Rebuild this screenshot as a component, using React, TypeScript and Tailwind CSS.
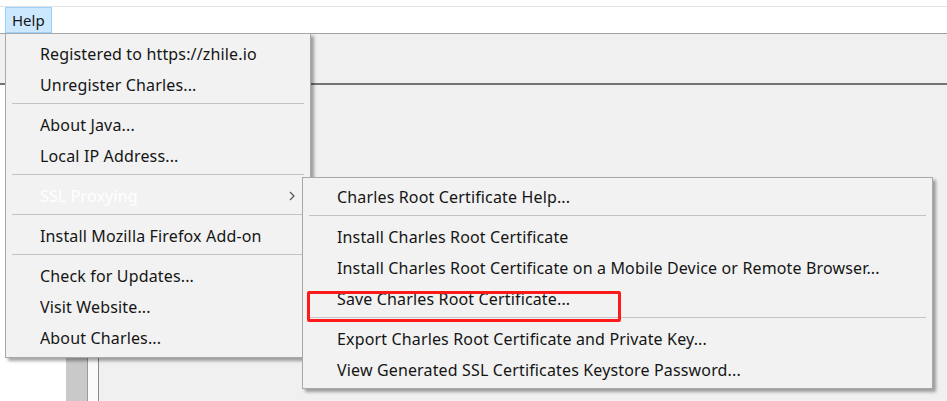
const main: (string | null)[] = [
  "Registered to https://zhile.io",
  "Unregister Charles...",
  null,
  "About Java...",
  "Local IP Address...",
  null,
  "SSL Proxying",
  null,
  "Install Mozilla Firefox Add-on",
  null,
  "Check for Updates...",
  "Visit Website...",
  "About Charles...",
];

const sub: (string | null)[] = [
  "Charles Root Certificate Help...",
  null,
  "Install Charles Root Certificate",
  "Install Charles Root Certificate on a Mobile Device or Remote Browser...",
  "Save Charles Root Certificate...",
  null,
  "Export Charles Root Certificate and Private Key...",
  "View Generated SSL Certificates Keystore Password...",
];

function Separator() {
  return (
    <div className="h-[9px] px-[6px] pt-[3px]">
      <div className="h-px bg-[#c4c4c4]" />
    </div>
  );
}

export default function App() {
  return (
    <div className="relative h-[401px] w-[947px] overflow-hidden bg-white font-['Noto_Sans','Liberation_Sans',sans-serif] text-[16px] tracking-[0.15px] text-[#151515]">
      {/* window chrome */}
      <div className="h-[7px] border-b border-[#e3e3e3] bg-white" />
      <div className="flex h-[26px] items-stretch bg-white">
        <div className="ml-[5px] flex items-center border border-[#99d1ff] bg-[#cce8ff] px-[6px] text-[15px] leading-none tracking-normal">
          Help
        </div>
      </div>
      <div className="h-[52px] border-t border-b-2 border-t-[#a0a0a0] border-b-[#747474] bg-[#f0f0f0]" />
      <div className="flex h-[316px]">
        <div className="w-[66px] bg-white" />
        <div className="w-[21px] bg-[#c9c9c9]" />
        <div className="w-[12px] border-l border-r border-l-[#9a9a9a] border-r-[#8a8a8a] bg-[#fafafa]" />
        <div className="flex-1 bg-[#f0f0f0]" />
      </div>

      {/* Help menu */}
      <div className="absolute left-[5px] top-[33px] w-[306px] border border-[#a8a8a8] bg-[#f2f2f2] pt-[4px] pb-[4px] shadow-[3px_3px_3px_rgba(0,0,0,0.35)]">
        {main.map((label, i) =>
          label === null ? (
            <Separator key={i} />
          ) : (
            <div key={i} className="relative flex h-[31px] items-center pl-[34px]">
              <span className={label === "SSL Proxying" ? "text-white" : ""}>{label}</span>
              {label === "SSL Proxying" && (
                <svg className="absolute right-[15px] top-[11px]" width="6" height="10" viewBox="0 0 6 10">
                  <path d="M1 1l4 4-4 4" fill="none" stroke="#555" strokeWidth="1.2" />
                </svg>
              )}
            </div>
          )
        )}
      </div>

      {/* SSL Proxying submenu */}
      <div className="absolute left-[302px] top-[177px] w-[631px] border border-[#a8a8a8] bg-[#f2f2f2] pt-[3px] pb-[3px] shadow-[3px_3px_3px_rgba(0,0,0,0.35)]">
        {sub.map((label, i) =>
          label === null ? (
            <Separator key={i} />
          ) : (
            <div key={i} className="flex h-[31px] items-center pl-[34px]">
              {label}
            </div>
          )
        )}
      </div>

      {/* annotation */}
      <div className="absolute left-[307px] top-[291px] h-[31px] w-[314px] rounded-[2px] border-[3px] border-[#ff1a1a]" />
    </div>
  );
}
